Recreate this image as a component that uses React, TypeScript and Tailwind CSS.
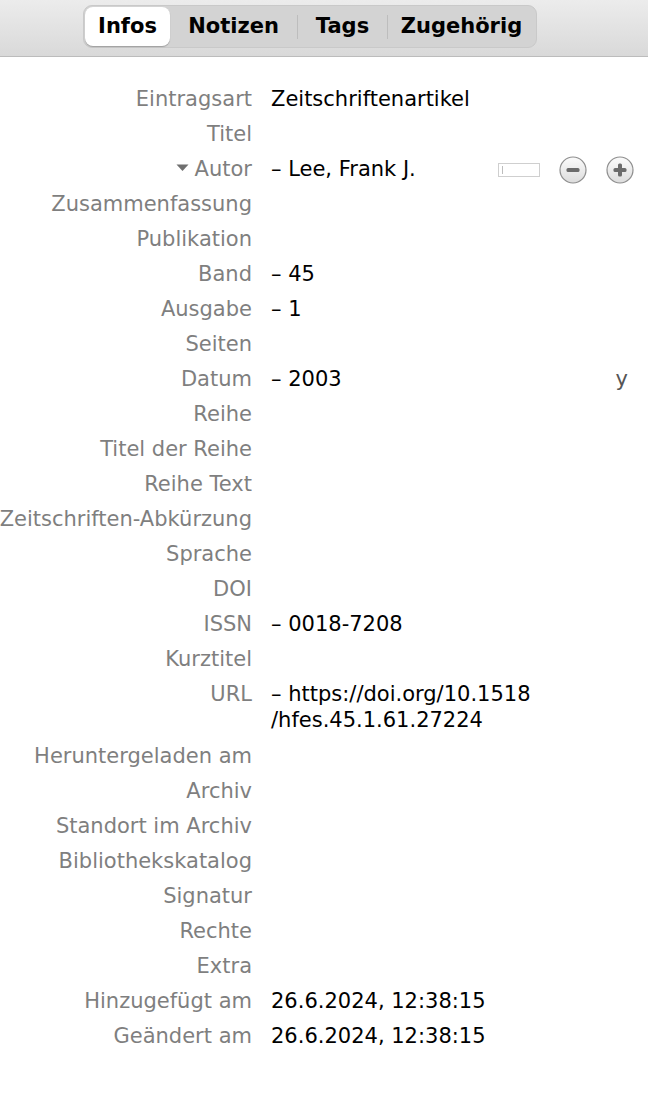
import React from "react";

const rows: { label: string; value?: string; value2?: string; dash?: boolean; kind?: string }[] = [
  { label: "Eintragsart", value: "Zeitschriftenartikel" },
  { label: "Titel" },
  { label: "Autor", value: "Lee, Frank J.", dash: true, kind: "author" },
  { label: "Zusammenfassung" },
  { label: "Publikation" },
  { label: "Band", value: "45", dash: true },
  { label: "Ausgabe", value: "1", dash: true },
  { label: "Seiten" },
  { label: "Datum", value: "2003", dash: true, kind: "date" },
  { label: "Reihe" },
  { label: "Titel der Reihe" },
  { label: "Reihe Text" },
  { label: "Zeitschriften-Abkürzung" },
  { label: "Sprache" },
  { label: "DOI" },
  { label: "ISSN", value: "0018-7208", dash: true },
  { label: "Kurztitel" },
  { label: "URL", value: "https://doi.org/10.1518", value2: "/hfes.45.1.61.27224", dash: true },
  { label: "Heruntergeladen am" },
  { label: "Archiv" },
  { label: "Standort im Archiv" },
  { label: "Bibliothekskatalog" },
  { label: "Signatur" },
  { label: "Rechte" },
  { label: "Extra" },
  { label: "Hinzugefügt am", value: "26.6.2024, 12:38:15" },
  { label: "Geändert am", value: "26.6.2024, 12:38:15" },
];

function CircleBtn({ plus }: { plus?: boolean }) {
  return (
    <svg width="28" height="28" viewBox="0 0 28 28">
      <defs>
        <linearGradient id={plus ? "gp" : "gm"} x1="0" y1="0" x2="0" y2="1">
          <stop offset="0" stopColor="#fbfbfb" />
          <stop offset="1" stopColor="#dcdcdc" />
        </linearGradient>
      </defs>
      <circle cx="14" cy="14" r="13" fill={`url(#${plus ? "gp" : "gm"})`} stroke="#8e8e8e" strokeWidth="1.2" />
      <rect x="7.5" y="12" width="13" height="4" rx="1.5" fill="#6b6b6b" />
      {plus && <rect x="12" y="7.5" width="4" height="13" rx="1.5" fill="#6b6b6b" />}
    </svg>
  );
}

export default function App() {
  const font = { fontFamily: '"DejaVu Sans", "Noto Sans", sans-serif' };
  return (
    <div className="w-[648px] h-[1102px] bg-white overflow-hidden" style={font}>
      <div className="h-[57px] bg-gradient-to-b from-[#ececec] to-[#d9d9d9] border-b border-[#bcbcbc] flex justify-center pt-[5px]">
        <div className="ml-[-28px] h-[43px] rounded-[9px] bg-[#d3d3d3] border border-[#c9c9c9] flex items-center px-[1px] text-[21px] font-bold text-black">
          <div className="h-[39px] w-[85px] rounded-[8px] bg-white shadow-[0_1px_1px_rgba(0,0,0,0.25)] flex items-center justify-center pt-[1px]">Infos</div>
          <div className="w-[127px] flex justify-center pt-[1px]">Notizen</div>
          <div className="w-px h-[24px] bg-[#bdbdbd]" />
          <div className="w-[89px] flex justify-center pt-[1px]">Tags</div>
          <div className="w-px h-[24px] bg-[#bdbdbd]" />
          <div className="w-[147px] flex justify-center pt-[1px]">Zugehörig</div>
        </div>
      </div>
      <div className="pt-[25px] text-[21px]">
        {rows.map((r) => (
          <div key={r.label} className="flex">
            <div className="w-[252px] shrink-0 flex justify-end h-[35px] items-center whitespace-nowrap text-[#7f7f7f]">
              {r.kind === "author" && (
                <svg width="13" height="8" viewBox="0 0 13 8" className="mr-[6px] mb-[3px] shrink-0">
                  <path d="M0.5 0.5 L12.5 0.5 L6.5 7 Z" fill="#6f6f6f" />
                </svg>
              )}
              {r.label}
            </div>
            <div className="flex-1 pl-[19px] text-black">
              {r.value && (
                <div className="flex items-center h-[35px]">
                  <span className="whitespace-nowrap">
                    {r.dash ? "– " : ""}
                    {r.value}
                  </span>
                  {r.kind === "author" && (
                    <div className="ml-auto flex items-center mr-[14px]">
                      <div className="w-[42px] h-[14px] border border-[#cfcfcf] bg-white flex items-center pl-[3px] mr-[19px]">
                        <div className="w-px h-[8px] bg-[#bdbdbd]" />
                      </div>
                      <CircleBtn />
                      <div className="w-[19px]" />
                      <CircleBtn plus />
                    </div>
                  )}
                  {r.kind === "date" && <span className="ml-auto mr-[20px] text-[#555]">y</span>}
                </div>
              )}
              {r.value2 && <div className="h-[36px] -mt-[9px] flex items-center whitespace-nowrap">{r.value2}</div>}
            </div>
          </div>
        ))}
      </div>
    </div>
  );
}
